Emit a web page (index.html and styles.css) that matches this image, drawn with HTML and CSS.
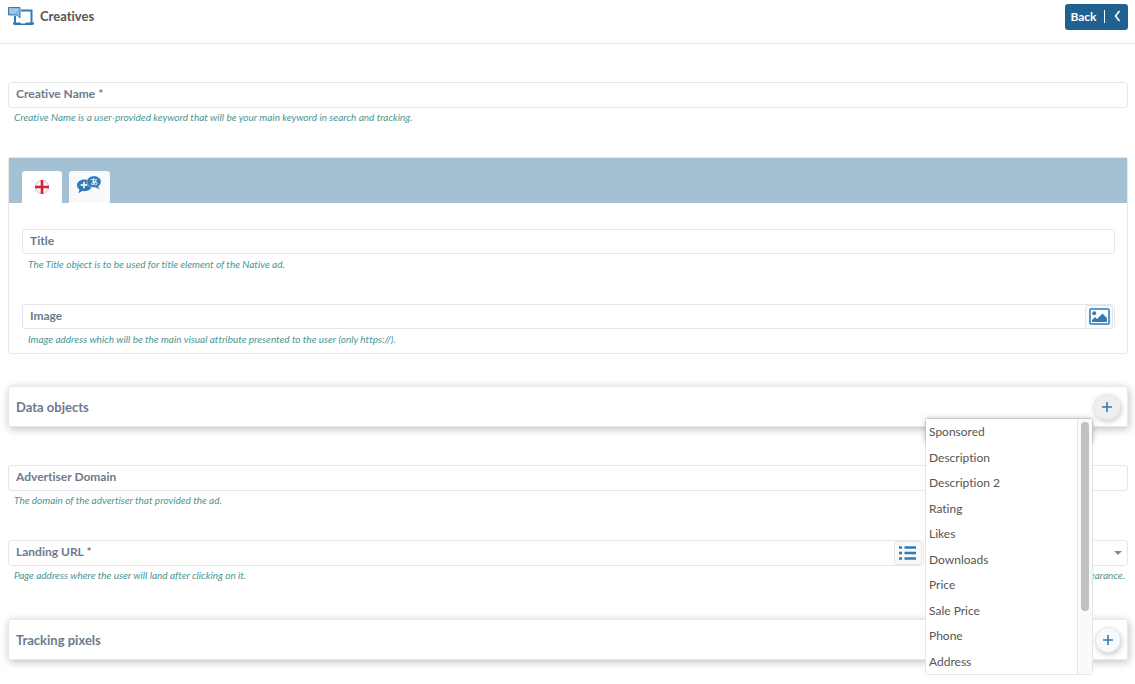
FILE: index.html
```html
<!DOCTYPE html>
<html lang="en">
<head>
    <meta charset="UTF-8">
    <meta name="viewport" content="width=device-width, initial-scale=1.0">
    <title>Creatives</title>
    <link rel="stylesheet" href="styles.css">
</head>
<body>
    <header class="topbar">
        <svg class="logo" width="26" height="19" viewBox="0 0 26 19">
            <path d="M13 3.5H23.5V16" fill="none" stroke="#337ab7" stroke-width="2"/>
            <path d="M7 9V16" stroke="#337ab7" stroke-width="2"/>
            <path d="M5 15.5H12L13 16.5H17L18 15.5H26V17L25 18H6L5 17Z" fill="#337ab7"/>
            <path d="M0.5 0.5H12V11L9 8H0.5Z" fill="#8fb8dc" stroke="#337ab7"/>
            <path d="M2 3H10M2 5H8" stroke="#b9d3ea"/>
        </svg>
        <h1>Creatives</h1>
        <button type="button" class="back-btn">
            <span>Back</span>
            <svg width="24" height="14" viewBox="0 0 24 14" fill="none" stroke="#fff">
                <path d="M3.5 1V14"/>
                <path d="M18.500 2L14.500 7L18.500 12" stroke-width="1.600"/>
            </svg>
        </button>
    </header>

    <form class="page">
        <div class="field">
            <div class="box">
                <label for="creativeName">Creative Name *</label>
                <input type="text" id="creativeName" name="creativeName" required>
            </div>
            <p class="hint">Creative Name is a user-provided keyword that will be your main keyword in search and tracking.</p>
        </div>

        <section class="panel">
            <div class="tabs">
                <button type="button" class="tab active" aria-label="English">
                    <svg width="16" height="16" viewBox="0 0 16 16">
                        <circle cx="8" cy="8" r="6.5" fill="#f6f7f7" stroke="#bfc5c9"/>
                        <path d="M8 1V15M1 8H15" stroke="#dc1f35" stroke-width="2.6"/>
                    </svg>
                </button>
                <button type="button" class="tab" aria-label="Add language">
                    <svg class="lang-icon" width="24" height="18" viewBox="0 0 24 18">
                        <path d="M7.500 3.500C3 3.500 0 6 0 9.200C0 11 1 12.600 2.400 13.600L1.300 17.200L5.400 15C11 15.800 15 13 15 9.200C15 6 12 3.500 7.500 3.500Z" fill="#337ab7"/>
                        <path d="M7 5.700V12.300M3.700 9H10.300" stroke="#dfeaf4" stroke-width="1.800"/>
                        <path d="M17 0C12.800 0 10 2.500 10 5.800C10 9.200 13 11.500 17 11.500L18.500 11.400L22.600 13.400L21.500 10.200C23 9.200 24 7.600 24 5.800C24 2.500 21 0 17 0Z" fill="#337ab7" stroke="#f7f9fb" stroke-width="0.400"/>
                        <path d="M14 3.800H20M16.500 2.200C16.200 5 16.500 7.500 17.500 9M18.800 5C18 8 15.500 9.300 14.600 8.300C13.800 6.800 17.500 5 19.500 6.200C21 7.400 20 8.900 18.400 9.100" fill="none" stroke="#fff"/>
                    </svg>
                </button>
            </div>
            <div class="panel-body">
                <div class="field">
                    <div class="box">
                        <label for="title">Title</label>
                        <input type="text" id="title" name="title">
                    </div>
                    <p class="hint">The Title object is to be used for title element of the Native ad.</p>
                </div>
                <div class="field">
                    <div class="box">
                        <label for="image">Image</label>
                        <input type="text" id="image" name="image">
                        <button type="button" class="addon" aria-label="Choose image">
                            <svg width="21" height="17" viewBox="0 0 21 17">
                                <rect x="1" y="1" width="19" height="15" rx="1" fill="#fff" stroke="#337ab7" stroke-width="1.600"/>
                                <circle cx="5.200" cy="5.200" r="2" fill="#337ab7"/>
                                <path d="M3 14V12L6 9L8 11L13.500 5.500L18 10V14Z" fill="#337ab7"/>
                            </svg>
                        </button>
                    </div>
                    <p class="hint">Image address which will be the main visual attribute presented to the user (only https://).</p>
                </div>
            </div>
        </section>

        <section class="card">
            <h2>Data objects</h2>
            <button type="button" class="add-btn open" aria-label="Add data object">
                <svg width="12" height="12" viewBox="0 0 12 12"><path d="M6 1V11M1 6H11" stroke="#337ab7" stroke-width="1.600"/></svg>
            </button>
            <div class="menu">
                <ul>
                    <li>Sponsored</li>
                    <li>Description</li>
                    <li>Description 2</li>
                    <li>Rating</li>
                    <li>Likes</li>
                    <li>Downloads</li>
                    <li>Price</li>
                    <li>Sale Price</li>
                    <li>Phone</li>
                    <li>Address</li>
                </ul>
                <div class="scroll"><div class="thumb"></div></div>
            </div>
        </section>

        <div class="field">
            <div class="box">
                <label for="domain">Advertiser Domain</label>
                <input type="text" id="domain" name="domain">
            </div>
            <p class="hint">The domain of the advertiser that provided the ad.</p>
        </div>

        <div class="row">
            <div class="field">
                <div class="box">
                    <label for="landingUrl">Landing URL *</label>
                    <input type="text" id="landingUrl" name="landingUrl" required>
                    <button type="button" class="addon" aria-label="Insert macro">
                        <svg width="17" height="14" viewBox="0 0 17 14" stroke="#337ab7" stroke-width="2.400">
                            <path d="M0 1.500H3M0 7H3M0 12.500H3M5.500 1.500H17M5.500 7H17M5.500 12.500H17"/>
                        </svg>
                    </button>
                </div>
                <p class="hint">Page address where the user will land after clicking on it.</p>
            </div>
            <div class="field">
                <div class="box">
                    <select name="appearance" aria-label="Appearance">
                        <option></option>
                    </select>
                    <svg class="caret" width="8" height="4" viewBox="0 0 8 4"><path d="M0 0H8L4 4Z" fill="#8c8c8c"/></svg>
                </div>
                <p class="hint right">Ad appearance.</p>
            </div>
        </div>

        <section class="card">
            <h2>Tracking pixels</h2>
            <button type="button" class="add-btn" aria-label="Add tracking pixel">
                <svg width="12" height="12" viewBox="0 0 12 12"><path d="M6 1V11M1 6H11" stroke="#337ab7" stroke-width="1.600"/></svg>
            </button>
        </section>
    </form>
</body>
</html>
```
FILE: styles.css
```css
* {
    box-sizing: border-box;
}
body {
    font-family: Lato, "Liberation Sans", sans-serif;
    font-variant-ligatures: none;
    background-color: #fff;
    color: #555;
    margin: 0;
}
h1, h2, p, ul {
    margin: 0;
    padding: 0;
}
button {
    font-family: inherit;
    padding: 0;
    border: none;
    cursor: pointer;
    display: flex;
    align-items: center;
    justify-content: center;
}
.topbar {
    display: flex;
    align-items: flex-start;
    height: 44px;
    padding: 4px 7px 0 8px;
    border-bottom: 1px solid #e6e8ea;
}
.logo {
    margin-top: 3px;
}
h1 {
    flex: 1;
    margin-left: 6px;
    font-size: 13px;
    line-height: 24px;
}
.back-btn {
    width: 63px;
    height: 26px;
    padding: 0 0 2px 2px;
    gap: 4px;
    border-radius: 3px;
    background-color: #20628f;
    color: #fff;
    font-size: 12px;
    font-weight: bold;
}
.page {
    padding: 38px 7px 0 8px;
}
.box {
    display: flex;
    align-items: center;
    height: 26px;
    padding-left: 7px;
    border: 1px solid #e4e7ea;
    border-radius: 3px;
}
label {
    padding-bottom: 3px;
    color: #6c7a8d;
    font-size: 12px;
    font-weight: bold;
}
input, select {
    flex: 1;
    min-width: 0;
    height: 22px;
    border: none;
    outline: none;
    background: none;
    font-family: inherit;
    font-size: 12px;
    appearance: none;
}
.hint {
    padding: 2px 3px 1px 6px;
    color: #4b9694;
    font-size: 10px;
    font-style: italic;
    line-height: 14px;
}
.right {
    text-align: right;
}
.addon {
    width: 28px;
    height: 24px;
    margin-right: 1px;
    border: 1px solid #e4e7ea;
    border-radius: 3px;
    background-color: #f7f9fb;
}
.caret {
    margin-right: 5px;
}
.panel {
    margin-top: 32px;
    border: 1px solid #e4e7ea;
    border-radius: 3px;
}
.tabs {
    display: flex;
    align-items: flex-end;
    gap: 7px;
    height: 45px;
    padding-left: 13px;
    background-color: #a3c1d2;
}
.tab {
    width: 41px;
    height: 32px;
    border-radius: 3px 3px 0 0;
    background-color: #f7f9fb;
}
.tab.active {
    width: 40px;
    background-color: #fff;
}
.lang-icon {
    margin: 0 2px 5px 0;
}
.panel-body {
    display: flex;
    flex-direction: column;
    gap: 32px;
    padding: 26px 12px 6px 13px;
}
.panel-body .box {
    height: 25px;
    margin-bottom: 1px;
}
.card {
    position: relative;
    display: flex;
    align-items: center;
    justify-content: space-between;
    height: 41px;
    margin: 32px 0 38px;
    padding: 0 6px 0 7px;
    border: 1px solid #e4e9ed;
    border-radius: 3px;
    box-shadow: 1px 2px 8px rgba(0, 0, 0, 0.25);
}
.card:last-child {
    margin-bottom: 16px;
}
h2 {
    color: #6c7a8d;
    font-size: 13px;
}
.add-btn {
    width: 26px;
    height: 26px;
    border: 1px solid #e4e9ed;
    border-radius: 50%;
    background-color: #f7f9fb;
    box-shadow: 1px 2px 5px rgba(0, 0, 0, 0.2);
}
.add-btn.open {
    width: 28px;
    background-color: #eee;
}
/* menu opens below the button, over the fields */
.menu {
    position: absolute;
    z-index: 2;
    top: 31px;
    right: 34px;
    display: flex;
    width: 168px;
    height: 257px;
    border: 1px solid #e2e6e9;
    border-radius: 3px;
    background-color: #fff;
}
.menu::before {
    content: "";
    position: absolute;
    z-index: -1;
    top: 0;
    left: 0;
    right: 0;
    height: 24px;
    box-shadow: 0 0 6px rgba(0, 0, 0, 0.3);
}
.menu ul {
    flex: 1;
    display: grid;
    grid-auto-rows: 1fr;
    align-items: center;
    padding-left: 3px;
    background-color: #fff;
    list-style: none;
    font-size: 12px;
}
.scroll {
    width: 15px;
    padding: 3px;
    border-left: 1px solid #e4e4e4;
    background-color: #fafafa;
}
.thumb {
    width: 8px;
    height: 189px;
    border-radius: 4px;
    background-color: #c1c1c1;
}
.row {
    display: grid;
    grid-template-columns: 14fr 3fr;
    gap: 8px;
    margin: 32px 0 36px;
}
```
